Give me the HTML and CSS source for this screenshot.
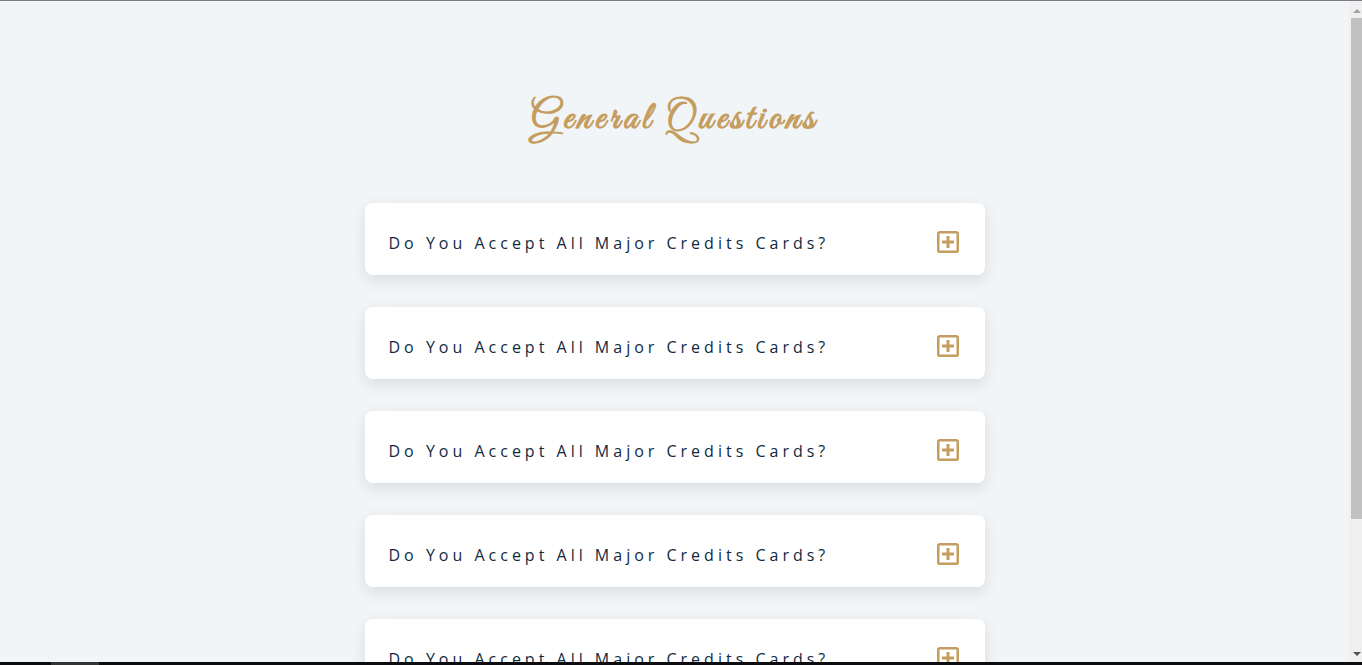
FILE: index.html
```html
<!DOCTYPE html>
<html lang="en">
<head>
<meta charset="utf-8">
<meta name="viewport" content="width=device-width, initial-scale=1">
<title>General Questions</title>
<link rel="stylesheet" href="styles.css">
</head>
<body>
<svg class="sprite" aria-hidden="true">
  <symbol id="plus" viewBox="0 0 22 22">
    <rect x="1.25" y="1.25" width="19.5" height="19.5" rx="1.5" fill="none" stroke="currentColor" stroke-width="2.5"/>
    <path d="M11 5v12M5 11h12" fill="none" stroke="currentColor" stroke-width="3"/>
  </symbol>
</svg>
<div class="frame">
  <main class="page">
    <h1 class="title">General Questions</h1>
    <section class="questions">
      <article class="question">
        <h2 class="question-text">Do You Accept All Major Credits Cards?</h2>
        <button class="question-btn" type="button" aria-label="Show answer"><svg class="icon"><use href="#plus"/></svg></button>
      </article>
      <article class="question">
        <h2 class="question-text">Do You Accept All Major Credits Cards?</h2>
        <button class="question-btn" type="button" aria-label="Show answer"><svg class="icon"><use href="#plus"/></svg></button>
      </article>
      <article class="question">
        <h2 class="question-text">Do You Accept All Major Credits Cards?</h2>
        <button class="question-btn" type="button" aria-label="Show answer"><svg class="icon"><use href="#plus"/></svg></button>
      </article>
      <article class="question">
        <h2 class="question-text">Do You Accept All Major Credits Cards?</h2>
        <button class="question-btn" type="button" aria-label="Show answer"><svg class="icon"><use href="#plus"/></svg></button>
      </article>
      <article class="question">
        <h2 class="question-text">Do You Accept All Major Credits Cards?</h2>
        <button class="question-btn" type="button" aria-label="Show answer"><svg class="icon"><use href="#plus"/></svg></button>
      </article>
    </section>
  </main>
  <div class="scrollbar" aria-hidden="true">
    <svg class="arrow arrow-up" viewBox="0 0 6 3"><path d="M0 3L3 0L6 3Z"/></svg>
    <div class="track"><div class="thumb"></div></div>
    <svg class="arrow arrow-down" viewBox="0 0 6 3"><path d="M0 0H6L3 3Z"/></svg>
  </div>
</div>
<div class="taskbar" aria-hidden="true"><div class="taskbar-item"></div></div>
</body>
</html>
```
FILE: styles.css
```css
* {
  box-sizing: border-box;
  margin: 0;
  padding: 0;
}

body {
  display: flex;
  flex-direction: column;
  height: 100vh;
  overflow: hidden;
  border-top: 1px solid #7d7e82;
  background: #f1f5f8;
  color: #102a42;
  font-family: "Open Sans", "Noto Sans", sans-serif;
}

.sprite {
  display: none;
}

.frame {
  display: flex;
  flex: 1;
  min-height: 0;
}

.page {
  flex: 1;
  overflow: hidden;
  padding: 88px 24px 0;
}

.title {
  margin-bottom: 54px;
  color: #c59d5f;
  font: bold 40px/60px "Great Vibes", "Liberation Serif", cursive;
  letter-spacing: 4px;
  text-align: center;
}

.questions {
  display: grid;
  gap: 32px;
  max-width: 620px;
  margin: 0 auto;
}

.question {
  display: flex;
  align-items: center;
  justify-content: space-between;
  padding: 24px;
  border-radius: 8px;
  background: #fff;
  box-shadow: 0 5px 15px rgba(0, 0, 0, 0.1);
}

.question-text {
  padding-top: 8px;
  font-size: 16px;
  font-weight: 400;
  line-height: 16px;
  letter-spacing: 4px;
}

.question-btn {
  display: flex;
  padding: 4px 2px 0 1px;
  border: 0;
  background: transparent;
  color: #c59d5f;
  cursor: pointer;
}

.icon {
  width: 22px;
  height: 22px;
  margin-bottom: -2px;
}

.scrollbar {
  display: flex;
  flex-direction: column;
  align-items: flex-end;
  width: 13px;
  padding: 8px 0 6px;
  background: #f0f0f0;
}

.arrow {
  width: 8px;
  height: 4px;
  margin-right: 1px;
  fill: #505050;
}

.arrow-up {
  margin-bottom: 5px;
  fill: #a3a3a3;
}

.track {
  flex: 1;
  width: 11px;
}

.thumb {
  height: 79%;
  background: #c1c1c1;
}

.taskbar {
  height: 3px;
  padding-left: 51px;
  background: #0c0c0e;
}

.taskbar-item {
  width: 48px;
  height: 3px;
  background: #333;
}
```
